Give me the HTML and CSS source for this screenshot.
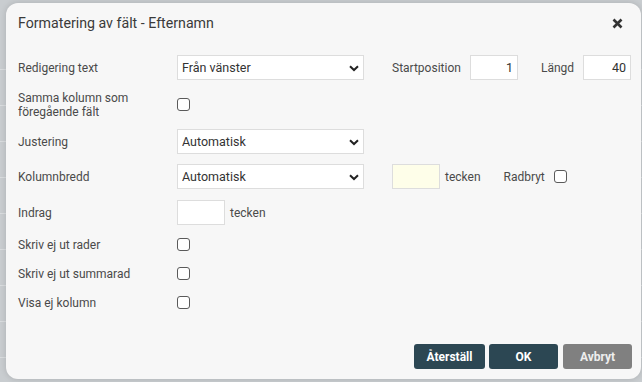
FILE: index.html
```html
<html lang="sv"><head>
    <meta charset="UTF-8">
    <meta name="viewport" content="width=device-width, initial-scale=1.0">
    <title>Formatering av fält</title>
    <link rel="stylesheet" href="styles.css">
</head>
<body>
    <!-- Page behind the dialog -->
    <div class="backdrop">
        <div class="bg-row"></div>
        <div class="bg-row"></div>
        <div class="bg-row"></div>
        <div class="bg-row"></div>
        <div class="bg-row"></div>
        <div class="bg-row"></div>
        <div class="bg-row"></div>
        <div class="bg-row"></div>
        <div class="bg-row"></div>
    </div>

    <div class="dialog">
        <div class="dialog-header">
            <span class="dialog-title">Formatering av fält - Efternamn</span>
            <svg class="close-icon" width="11" height="11" viewBox="0 0 11 11">
                <path d="M1.5 1.5 L9.5 9.5 M9.5 1.5 L1.5 9.5" stroke="#333" stroke-width="2.6" stroke-linecap="butt"/>
            </svg>
        </div>

        <div class="dialog-body">
            <div class="row">
                <label class="lbl">Redigering text</label>
                <div class="select-wrap">
                    <select class="sel"><option>Från vänster</option></select>
                    <svg class="chevron" width="10" height="7" viewBox="0 0 10 7"><path d="M1 1.2 L5 5 L9 1.2" fill="none" stroke="#222" stroke-width="2"/></svg>
                </div>
                <span class="inline-lbl start-lbl">Startposition</span>
                <input class="num" type="text" value="1">
                <span class="inline-lbl len-lbl">Längd</span>
                <input class="num" type="text" value="40">
            </div>

            <div class="row row-tall">
                <label class="lbl">Samma kolumn som<br>föregående fält</label>
                <span class="check"></span>
            </div>

            <div class="row">
                <label class="lbl">Justering</label>
                <div class="select-wrap">
                    <select class="sel"><option>Automatisk</option></select>
                    <svg class="chevron" width="10" height="7" viewBox="0 0 10 7"><path d="M1 1.2 L5 5 L9 1.2" fill="none" stroke="#222" stroke-width="2"/></svg>
                </div>
            </div>

            <div class="row">
                <label class="lbl">Kolumnbredd</label>
                <div class="select-wrap">
                    <select class="sel"><option>Automatisk</option></select>
                    <svg class="chevron" width="10" height="7" viewBox="0 0 10 7"><path d="M1 1.2 L5 5 L9 1.2" fill="none" stroke="#222" stroke-width="2"/></svg>
                </div>
                <input class="num num-yellow" type="text" value="">
                <span class="unit">tecken</span>
                <span class="inline-lbl wrap-lbl">Radbryt</span>
                <span class="check"></span>
            </div>

            <div class="row row-indent">
                <label class="lbl">Indrag</label>
                <input class="num" type="text" value="">
                <span class="unit">tecken</span>
            </div>

            <div class="row row-check">
                <label class="lbl">Skriv ej ut rader</label>
                <span class="check"></span>
            </div>

            <div class="row row-check">
                <label class="lbl">Skriv ej ut summarad</label>
                <span class="check"></span>
            </div>

            <div class="row row-check">
                <label class="lbl">Visa ej kolumn</label>
                <span class="check"></span>
            </div>
        </div>

        <div class="dialog-footer">
            <button class="btn btn-dark btn-reset">Återställ</button>
            <button class="btn btn-dark">OK</button>
            <button class="btn btn-grey">Avbryt</button>
        </div>
    </div>
</body></html>
```

FILE: styles.css
```css
body {
    margin: 0;
    font-family: Roboto, "Liberation Sans", sans-serif;
    background-color: #c9cdd0;
    width: 642px;
    height: 382px;
    overflow: hidden;
    position: relative;
}
.backdrop {
    padding-top: 34px;
}
.bg-row {
    height: 35px;
    border-bottom: 1px solid #dadddf;
}
.dialog {
    position: absolute;
    left: 6px;
    top: 3px;
    width: 635px;
    height: 376px;
    background-color: #f7f7f7;
    border-radius: 12px;
    box-shadow: 0 0 6px rgba(0, 0, 0, 0.15);
    display: flex;
    flex-direction: column;
}
.dialog-header {
    height: 40px;
    display: flex;
    align-items: center;
    justify-content: space-between;
    padding: 0 18px 0 12px;
}
.dialog-title {
    font-size: 14.2px;
    color: #3a3a3a;
}
.close-icon {
    display: block;
}
.dialog-body {
    padding: 12px 0 0 12px;
    display: flex;
    flex-direction: column;
    gap: 10px;
    flex: 1;
}
.row {
    display: flex;
    align-items: center;
    height: 25px;
}
.row-tall {
    height: 29px;
}
.row-indent {
    margin-top: 1px;
}
.row-check {
    height: 19px;
}
.lbl {
    width: 159px;
    font-size: 12px;
    line-height: 14px;
    color: #4a4a4a;
}
.select-wrap {
    position: relative;
    width: 187px;
    height: 25px;
}
.sel {
    appearance: none;
    -webkit-appearance: none;
    width: 100%;
    height: 25px;
    margin: 0;
    padding: 0 4px;
    border: 1px solid #ddd;
    border-radius: 0;
    background: #fff;
    font-family: Roboto, "Liberation Sans", sans-serif;
    font-size: 12.5px;
    color: #333;
}
.chevron {
    position: absolute;
    right: 5px;
    top: 10px;
}
.num {
    width: 48px;
    height: 25px;
    box-sizing: border-box;
    margin: 0;
    padding: 0 4px;
    border: 1px solid #ddd;
    background: #fff;
    font-family: Roboto, "Liberation Sans", sans-serif;
    font-size: 12.5px;
    color: #333;
    text-align: right;
}
.num-yellow {
    background: #fefee9;
    margin-left: 28px;
}
.inline-lbl, .unit {
    font-size: 12px;
    color: #4a4a4a;
}
.start-lbl {
    margin-left: 28px;
    width: 78px;
}
.len-lbl {
    margin-left: 23px;
    width: 42px;
}
.unit {
    margin-left: 5px;
}
.wrap-lbl {
    margin-left: 23px;
    margin-right: 9px;
}
.check {
    width: 11px;
    height: 11px;
    border: 1px solid #5a5a5a;
    border-radius: 3px;
    background: #fff;
    display: inline-block;
}
.dialog-footer {
    display: flex;
    justify-content: flex-end;
    gap: 4px;
    padding: 0 9px 10px 0;
}
.btn {
    height: 25px;
    width: 69px;
    border: none;
    border-radius: 3px;
    font-family: Roboto, "Liberation Sans", sans-serif;
    font-size: 12px;
    font-weight: bold;
    color: #fff;
    cursor: pointer;
}
.btn-reset {
    width: 71px;
}
.btn-dark {
    background: #2c4753;
}
.btn-grey {
    background: #808080;
    color: #eee;
    margin-left: 1px;
}
```
